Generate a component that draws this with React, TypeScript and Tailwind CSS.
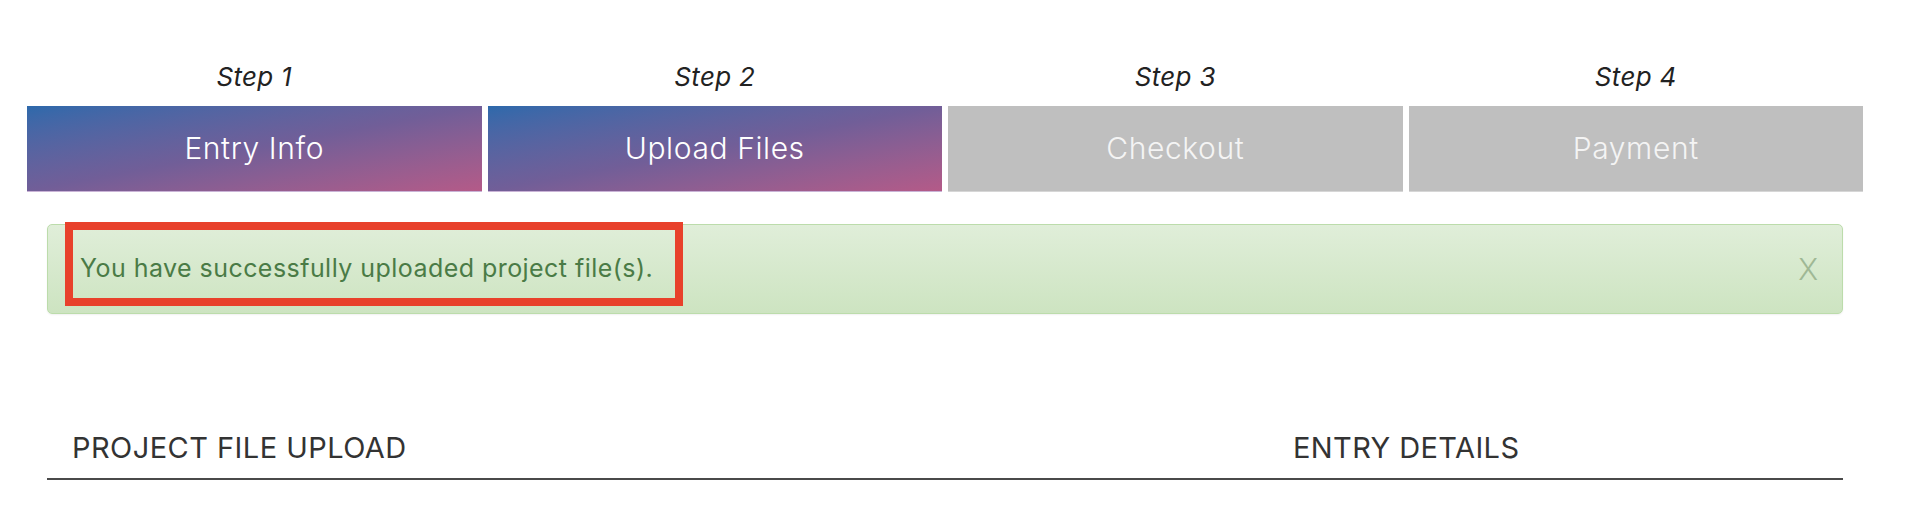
const steps = [
  { label: "Step 1", title: "Entry Info", done: true },
  { label: "Step 2", title: "Upload Files", done: true },
  { label: "Step 3", title: "Checkout", done: false },
  { label: "Step 4", title: "Payment", done: false },
];

export default function App() {
  return (
    <div className="h-[505px] w-full overflow-hidden bg-white font-['Inter',sans-serif] text-[#333]">
      {/* progress steps */}
      <div className="ml-[27px] grid w-[1836px] grid-cols-4 gap-x-[6px] pt-[61px]">
        {steps.map(step => (
          <div key={step.label} className="flex flex-col items-center">
            <div className="mb-[13px] text-[26px] leading-[32px] font-[450] italic tracking-[0.3px] text-[#222]">
              {step.label}
            </div>
            <div
              className={
                step.done
                  ? "flex h-[86px] w-full items-center justify-center border-b border-[#c9b3d6] bg-linear-to-br from-[#2d69ab] via-[#715e98] to-[#b45a88] text-[30px] font-light tracking-[0.6px] text-white"
                  : "flex h-[86px] w-full items-center justify-center border-b border-[#d6d6d6] bg-[#bfbfbf] text-[30px] font-light tracking-[0.6px] text-[#f4f4f4]"
              }
            >
              {step.title}
            </div>
          </div>
        ))}
      </div>

      <div className="ml-[47px] w-[1796px]">
        {/* success alert */}
        <div className="relative mt-[32px] flex h-[90px] items-center justify-between rounded-[5px] border border-[#bcdcab] bg-linear-to-b from-[#e0eed9] to-[#cde4c1] pr-[24px] pl-[32px] shadow-[0_1px_2px_rgba(0,0,0,0.06)]">
          <span className="text-[25px] tracking-[0.45px] text-[#4a7b46]">
            You have successfully uploaded project file(s).
          </span>
          <button className="text-[30px] leading-none font-light text-[#9fb895]">
            X
          </button>
          <div className="pointer-events-none absolute top-[-3px] left-[17px] h-[84px] w-[618px] border-[8px] border-[#e8412b]" />
        </div>

        {/* section headings */}
        <div className="mt-[116px] flex border-b-2 border-[#4a4a4a] pb-[12px]">
          <h2 className="w-[1246px] pl-[25px] text-[29px] leading-[36px] tracking-[0.45px] text-[#333]">
            PROJECT FILE UPLOAD
          </h2>
          <h2 className="text-[29px] leading-[36px] tracking-[0.4px] text-[#333]">ENTRY DETAILS</h2>
        </div>
      </div>
    </div>
  );
}
